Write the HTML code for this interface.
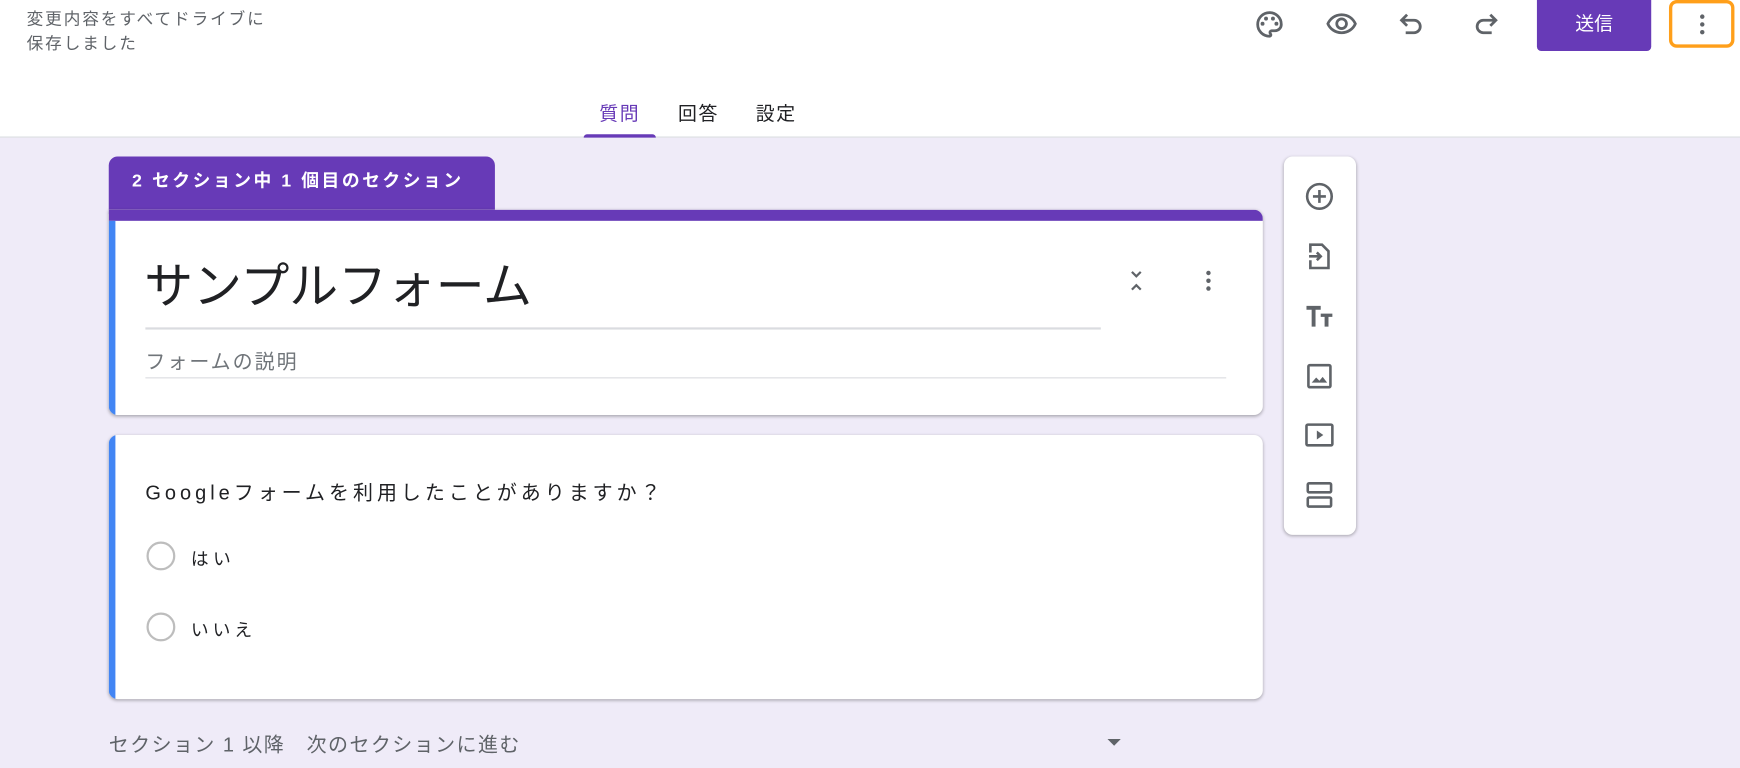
<!DOCTYPE html>
<html><head><meta charset="utf-8"><style>
*{margin:0;padding:0;box-sizing:border-box}
html,body{width:1740px;height:768px;overflow:hidden;background:#efebf8}
body{font-family:"Liberation Sans","Noto Sans CJK JP",sans-serif}
#w{position:absolute;left:0;top:0;width:1568px;height:692px;transform:scale(1.10969);transform-origin:0 0;background:#efebf8}
.a{position:absolute;white-space:nowrap}
#hdr{left:0;top:0;width:1568px;height:124px;background:#fff;border-bottom:1px solid #dadce0}
.ic{position:absolute;width:24px;height:24px}
.hi{position:absolute;width:30px;height:30px;top:7px}
.card{background:#fff;border-radius:8px;box-shadow:0 1px 3px rgba(0,0,0,.3)}
</style></head><body><div id="w">
<div id="hdr" class="a">
 <div class="a" style="left:24px;top:7px;font-size:15px;line-height:22px;color:#5f6368;letter-spacing:1.7px">変更内容をすべてドライブに<br>保存しました</div>
 <svg class="hi" style="left:1129px" viewBox="0 0 24 24"><path d="M12 3.5a8.5 8.5 0 0 0 0 17c.6 0 1-.45 1-1 0-.3-.1-.5-.3-.7-.2-.25-.35-.55-.35-.9 0-.75.6-1.35 1.35-1.35H16a4.5 4.5 0 0 0 4.5-4.5C20.5 7.2 16.7 3.5 12 3.5z" fill="none" stroke="#5f6368" stroke-width="2"/><g fill="#5f6368"><circle cx="7" cy="11.5" r="1.4"/><circle cx="9.5" cy="7.8" r="1.4"/><circle cx="14.5" cy="7.8" r="1.4"/><circle cx="17" cy="11.5" r="1.4"/></g></svg>
 <svg class="hi" style="left:1194px" viewBox="0 0 24 24" fill="#5f6368"><path d="M12 6a9.77 9.77 0 0 1 8.82 5.5A9.77 9.77 0 0 1 12 17a9.77 9.77 0 0 1-8.82-5.5A9.77 9.77 0 0 1 12 6m0-2C7 4 2.73 7.11 1 11.5 2.73 15.89 7 19 12 19s9.27-3.11 11-7.5C21.27 7.11 17 4 12 4zm0 5a2.5 2.5 0 1 1 0 5 2.5 2.5 0 0 1 0-5m0-2c-2.48 0-4.5 2.02-4.5 4.5S9.52 16 12 16s4.5-2.02 4.5-4.5S14.48 7 12 7z"/></svg>
 <svg class="hi" style="left:1258px" viewBox="0 0 24 24" fill="none" stroke="#5f6368" stroke-width="2"><path d="M8 5L4 9l4 4M4 9h9a4.5 4.5 0 0 1 0 9H7"/></svg>
 <svg class="hi" style="left:1323px" viewBox="0 0 24 24" fill="none" stroke="#5f6368" stroke-width="2"><path d="M16 5l4 4-4 4M20 9h-9a4.5 4.5 0 0 0 0 9h6"/></svg>
 <div class="a" style="left:1385px;top:0;width:103px;height:46px;background:#673ab7;border-radius:0 0 4px 4px;color:#fff;font-size:17px;text-align:center;line-height:44px">送信</div>
 <div class="a" style="left:1504px;top:0;width:59px;height:43px;border:3px solid #ff9f1a;border-radius:7px"></div>
 <svg class="ic" style="left:1522px;top:10px" viewBox="0 0 24 24" fill="#5f6368"><circle cx="12" cy="5" r="2"/><circle cx="12" cy="12" r="2"/><circle cx="12" cy="19" r="2"/></svg>
 <div class="a" style="left:540px;top:88px;font-size:17px;color:#673ab7;letter-spacing:1.5px">質問</div>
 <div class="a" style="left:526px;top:121px;width:65px;height:3px;background:#673ab7;border-radius:3px 3px 0 0"></div>
 <div class="a" style="left:611px;top:88px;font-size:17px;color:#202124;letter-spacing:1.5px">回答</div>
 <div class="a" style="left:681px;top:88px;font-size:17px;color:#202124;letter-spacing:1.5px">設定</div>
</div>
<div class="a" style="left:98px;top:141px;width:348px;height:52px;background:#673ab7;border-radius:8px 8px 0 0;color:#fff;font-size:16px;font-weight:bold;padding-left:21px;line-height:46px;letter-spacing:2.3px">2 セクション中 1 個目のセクション</div>
<div class="a card" style="left:98px;top:189px;width:1040px;height:185px;border-radius:0 8px 8px 8px;overflow:hidden">
 <div class="a" style="left:0;top:0;width:1040px;height:10px;background:#673ab7"></div>
 <div class="a" style="left:0;top:10px;width:6px;height:175px;background:#4285f4"></div>
 <div class="a" style="left:32px;top:40px;font-size:44px;line-height:60px;color:#202124">サンプルフォーム</div>
 <div class="a" style="left:33px;top:106px;width:861px;height:2px;background:#dadce0"></div>
 <div class="a" style="left:33px;top:123px;font-size:18px;color:#70757a;letter-spacing:1.8px">フォームの説明</div>
 <div class="a" style="left:33px;top:151px;width:974px;height:1px;background:#dadce0"></div>
 <svg class="ic" style="left:914px;top:52px" viewBox="0 0 24 24" fill="none" stroke="#5f6368" stroke-width="2"><path d="M8 4l4 4 4-4M8 20l4-4 4 4"/></svg>
 <svg class="ic" style="left:979px;top:52px" viewBox="0 0 24 24" fill="#5f6368"><circle cx="12" cy="5" r="2"/><circle cx="12" cy="12" r="2"/><circle cx="12" cy="19" r="2"/></svg>
</div>
<div class="a card" style="left:98px;top:392px;width:1040px;height:238px;overflow:hidden">
 <div class="a" style="left:0;top:0;width:6px;height:238px;background:#4285f4"></div>
 <div class="a" style="left:33px;top:38px;font-size:18px;color:#202124;letter-spacing:3.6px">Googleフォームを利用したことがありますか？</div>
 <div class="a" style="left:34px;top:96px;width:26px;height:26px;border:2px solid #bdbdbd;border-radius:50%"></div>
 <div class="a" style="left:74px;top:98px;font-size:16px;color:#202124;letter-spacing:4px">はい</div>
 <div class="a" style="left:34px;top:160px;width:26px;height:26px;border:2px solid #bdbdbd;border-radius:50%"></div>
 <div class="a" style="left:74px;top:162px;font-size:16px;color:#202124;letter-spacing:3.6px">いいえ</div>
</div>
<div class="a" style="left:98px;top:657px;font-size:18px;color:#5f6368;letter-spacing:1.3px">セクション 1 以降　次のセクションに進む</div>
<div class="a" style="left:998px;top:666px;width:0;height:0;border-left:6px solid transparent;border-right:6px solid transparent;border-top:6px solid #5f6368"></div>
<div class="a card" style="left:1157px;top:141px;width:65px;height:341px">
 <svg class="ic" style="left:18px;top:22px;width:28px;height:28px" viewBox="0 0 24 24" fill="none" stroke="#5f6368" stroke-width="2"><circle cx="12" cy="12" r="9.5"/><path d="M12 7v10M7 12h10"/></svg>
 <svg class="ic" style="left:18px;top:76px;width:28px;height:28px" viewBox="0 0 24 24" fill="none" stroke="#5f6368" stroke-width="2"><path d="M5 9V3h9l5 5v13H5v-6"/><path d="M4 12h9M10 9l3 3-3 3"/></svg>
 <svg class="ic" style="left:18px;top:130px;width:28px;height:28px" viewBox="0 0 24 24" fill="#5f6368"><path d="M2 4h11v3H9v13H6V7H2zM13 10h9v2.5h-3V20h-3v-7.5h-3z"/></svg>
 <svg class="ic" style="left:18px;top:184px;width:28px;height:28px" viewBox="0 0 24 24" fill="none" stroke="#5f6368" stroke-width="2"><rect x="3.5" y="3.5" width="17" height="17" rx="1"/><path d="M6 17l3.5-4 2.5 2.5 2.5-3 3.5 4.5z" fill="#5f6368" stroke="none"/></svg>
 <svg class="ic" style="left:18px;top:237px;width:28px;height:28px" viewBox="0 0 24 24" fill="none" stroke="#5f6368" stroke-width="2"><rect x="2" y="4" width="20" height="16" rx="1"/><path d="M10 8.5v7l5-3.5z" fill="#5f6368" stroke="none"/></svg>
 <svg class="ic" style="left:18px;top:291px;width:28px;height:28px" viewBox="0 0 24 24" fill="none" stroke="#5f6368" stroke-width="2"><rect x="3" y="3" width="18" height="7" rx="1"/><rect x="3" y="14" width="18" height="7" rx="1"/></svg>
</div>
</div></body></html>
